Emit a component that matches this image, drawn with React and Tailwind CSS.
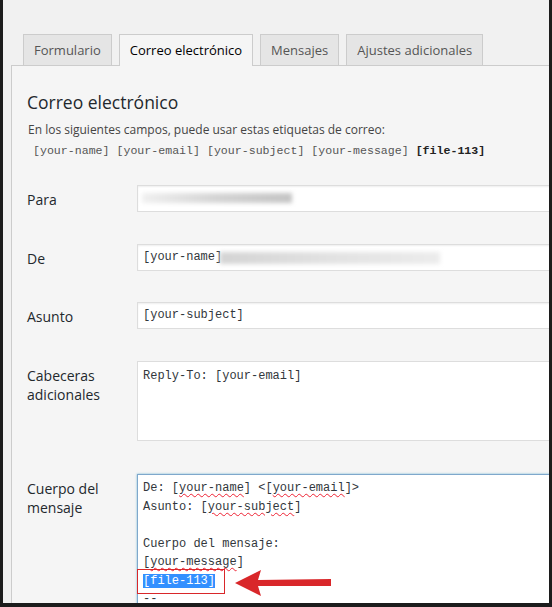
import React from 'react';

const tabs = [
  ['Formulario', false],
  ['Correo electrónico', true],
  ['Mensajes', false],
  ['Ajustes adicionales', false],
];

const mono = { fontFamily: '"Liberation Mono", "DejaVu Sans Mono", monospace' };

const Spell = ({ children }) => (
  <span className="underline decoration-wavy decoration-[#e23] decoration-1 underline-offset-2">{children}</span>
);

const Row = ({ label, children, className = '' }) => (
  <div className={`flex ${className}`}>
    <div className="w-[110px] shrink-0 pt-[5px] text-[14px] leading-[19px] text-[#23282d]">{label}</div>
    <div className="flex-1">{children}</div>
  </div>
);

const Input = ({ children }) => (
  <div className="relative h-[27px] border border-[#ddd] bg-white pl-[5px] text-[12px] leading-[25px] text-[#32373c] shadow-[inset_0_1px_2px_rgba(0,0,0,0.07)]" style={mono}>
    {children}
  </div>
);

export default function App() {
  return (
    <div
      className="h-[607px] w-[552px] overflow-hidden bg-[#1c1c1c] pb-[4px] pl-[3px] pr-[3px]"
      style={{ fontFamily: '"Open Sans", "Noto Sans", sans-serif' }}
    >
      <div className="h-full overflow-hidden bg-[#f1f1f1] pt-[34px]">
        <div className="flex gap-[7px] pl-[20px]">
          {tabs.map(([name, active]) => (
            <div
              key={name}
              className={
                active
                  ? 'relative z-10 -mb-px h-[32px] border border-b-0 border-[#ccc] bg-[#f5f5f5] px-[10px] text-[13px] leading-[30px] text-[#000]'
                  : 'h-[31px] border border-b-0 border-[#ccc] bg-[#e5e5e5] px-[10px] text-[13px] leading-[30px] text-[#555]'
              }
            >
              {name}
            </div>
          ))}
        </div>
        <div className="ml-[8px] mr-[-20px] h-[600px] border-l border-t border-[#ccc] bg-[#f5f5f5] pl-[15px] pt-[24px]">
          <h2 className="text-[17.5px] font-normal leading-[24px] text-[#23282d]">Correo electrónico</h2>
          <p className="mt-[7px] pl-px text-[12px] leading-[18px] text-[#444]">
            En los siguientes campos, puede usar estas etiquetas de correo:
          </p>
          <p className="mt-[3px] pl-[6px] text-[11.6px] leading-[18px] text-[#555]" style={mono}>
            [your-name] [your-email] [your-subject] [your-message] <span className="font-bold text-[#222]">[file-113]</span>
          </p>

          <div className="mt-[25px]">
            <Row label="Para">
              <Input>
                <div className="absolute left-[4px] top-[7px] h-[10px] w-[150px] bg-gradient-to-r from-[#f0f0f0] via-[#d4d4d4] to-[#c4c4c4] blur-[2px]" />
              </Input>
            </Row>
            <Row label="De" className="mt-[32px]">
              <Input>
                <span className="relative">[your-name]</span>
                <div className="absolute left-[82px] top-[7px] h-[12px] w-[220px] bg-gradient-to-r from-[#d4d4d4] via-[#e2e2e2] to-[#ececec] blur-[2px]" />
              </Input>
            </Row>
            <Row label="Asunto" className="mt-[31px]">
              <Input>[your-subject]</Input>
            </Row>
            <Row label="Cabeceras adicionales" className="mt-[32px]">
              <div className="h-[80px] border border-[#ddd] bg-white pl-[5px] pt-[5px] text-[12px] leading-[18.5px] text-[#32373c]" style={mono}>
                Reply-To: [your-email]
              </div>
            </Row>
            <Row label={<>Cuerpo del<br />mensaje</>} className="mt-[33px]">
              <div className="h-[200px] border border-[#7fa8cc] bg-white pl-[5px] pt-[4px] text-[12px] leading-[18.5px] text-[#32373c] shadow-[0_0_2px_rgba(30,140,190,0.6)]" style={mono}>
                <div>De: [<Spell>your-name</Spell>] &lt;[<Spell>your-email</Spell>]&gt;</div>
                <div>Asunto: [<Spell>your-subject</Spell>]</div>
                <div>&nbsp;</div>
                <div>Cuerpo del mensaje:</div>
                <div>[<Spell>your-message</Spell>]</div>
                <div className="relative">
                  <span className="bg-[#3390ff] text-white">[file-113]</span>
                  <span className="absolute left-[-6px] top-[-3px] h-[25px] w-[88px] border border-[#d9272a]" />
                  <svg className="absolute left-[91px] top-[-3px]" width="100" height="28" viewBox="0 0 100 28">
                    <polygon points="1,14 27,1 24,11 97,10 97,17 24,17 27,27" fill="#d9272a" />
                  </svg>
                </div>
                <div>--</div>
              </div>
            </Row>
          </div>
        </div>
      </div>
    </div>
  );
}
